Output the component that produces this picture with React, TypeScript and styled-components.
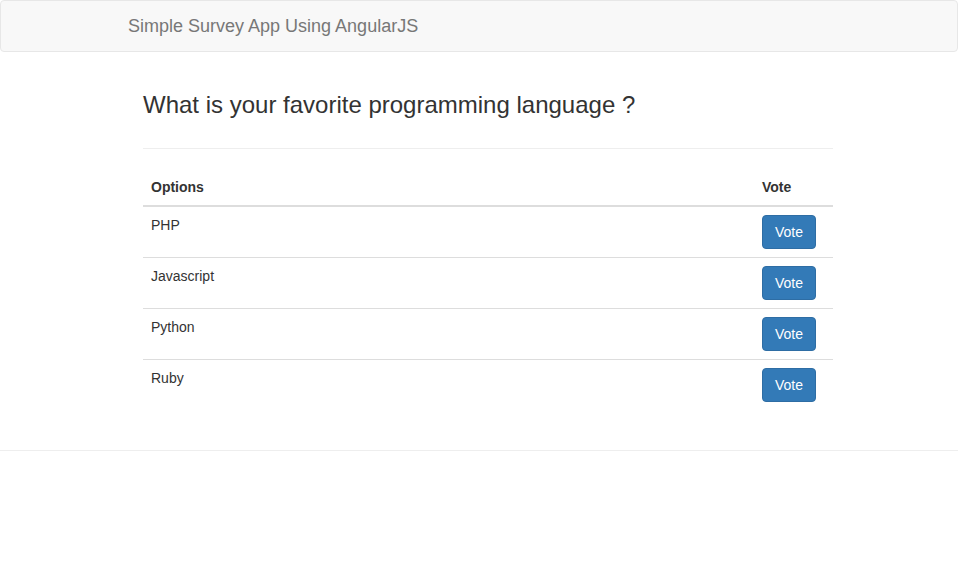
import React from "react";
import styled, { createGlobalStyle } from "styled-components";

const Global = createGlobalStyle`
  * { box-sizing: border-box; }
  html, body { margin: 0; padding: 0; background: #fff; }
  body {
    font-family: "Liberation Sans", Arial, Helvetica, sans-serif;
    font-size: 14px;
    line-height: 1.42857143;
    color: #333;
  }
`;

const Page = styled.div`
  display: flex;
  flex-direction: column;
`;

const Navbar = styled.nav`
  min-height: 52px;
  background: #f8f8f8;
  border: 1px solid #e7e7e7;
  border-radius: 4px;
  margin-bottom: 20px;
  display: flex;
  align-items: flex-start;
  padding-left: 127px;
`;

const Brand = styled.a`
  display: block;
  padding: 15px 0;
  font-size: 18px;
  line-height: 20px;
  color: #777;
  text-decoration: none;
`;

const Main = styled.main`
  display: flex;
  flex-direction: column;
  margin-left: 143px;
  width: 690px;
`;

const Title = styled.h3`
  margin: 20px 0 10px;
  font-size: 24px;
  font-weight: 500;
  line-height: 1.1;
  color: #333;
`;

const Rule = styled.hr`
  margin: 20px 0;
  border: 0;
  border-top: 1px solid #eee;
  height: 0;
  width: 100%;
`;

const Table = styled.table`
  width: 100%;
  border-collapse: collapse;
  border-spacing: 0;
  margin-bottom: 20px;
`;

const Th = styled.th<{ $w?: string }>`
  text-align: left;
  padding: 8px;
  line-height: 20px;
  font-weight: bold;
  vertical-align: bottom;
  border-bottom: 2px solid #ddd;
  width: ${(p) => p.$w || "auto"};
`;

const Td = styled.td`
  padding: 8px;
  line-height: 20px;
  vertical-align: top;
  border-top: 1px solid #ddd;
`;

const Row = styled.tr`
  &:first-child td { border-top: 0; }
`;

const Button = styled.button`
  display: inline-block;
  padding: 6px 12px;
  font-family: inherit;
  font-size: 14px;
  line-height: 20px;
  color: #fff;
  background: #337ab7;
  border: 1px solid #2e6da4;
  border-radius: 4px;
  cursor: pointer;
`;

const Footer = styled.div`
  border-top: 1px solid #eee;
  margin-top: 20px;
  height: 127px;
`;

const options = ["PHP", "Javascript", "Python", "Ruby"];

export default function App() {
  return (
    <Page>
      <Global />
      <Navbar>
        <Brand href="#">Simple Survey App Using AngularJS</Brand>
      </Navbar>
      <Main>
        <Title>What is your favorite programming language ?</Title>
        <Rule />
        <Table>
          <thead>
            <tr>
              <Th>Options</Th>
              <Th $w="79px">Vote</Th>
            </tr>
          </thead>
          <tbody>
            {options.map((o) => (
              <Row key={o}>
                <Td>{o}</Td>
                <Td>
                  <Button>Vote</Button>
                </Td>
              </Row>
            ))}
          </tbody>
        </Table>
      </Main>
      <Footer />
    </Page>
  );
}
